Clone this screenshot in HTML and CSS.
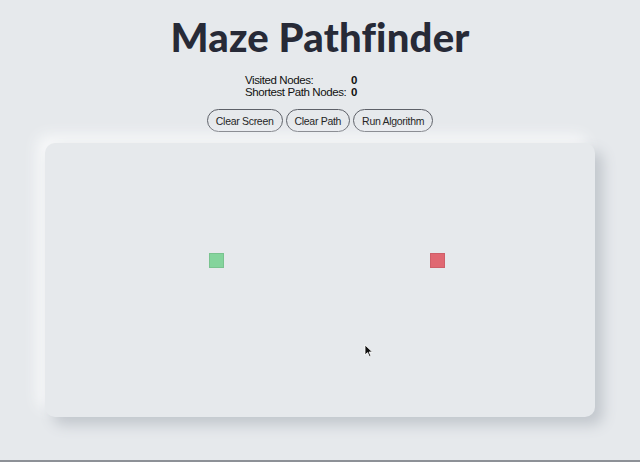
FILE: index.html
```html
<!DOCTYPE html>
<html>
<head>
<meta charset="utf-8">
<link rel="stylesheet" href="styles.css">
</head>
<body>
<div class="page">
  <h1 class="title">Maze Pathfinder</h1>
  <div class="stats">
    <span class="label">Visited Nodes:</span><span class="value">0</span>
    <span class="label">Shortest Path Nodes:</span><span class="value">0</span>
  </div>
  <div class="buttons">
    <button class="btn">Clear Screen</button>
    <button class="btn">Clear Path</button>
    <button class="btn">Run Algorithm</button>
  </div>
  <div class="board">
    <div class="grid">
      <div class="node start"></div>
      <div class="node end"></div>
    </div>
    <svg class="cursor" width="10" height="14" viewBox="0 0 10 14"><path d="M1 1 L1 11 L3.5 8.6 L5.4 12.6 L6.9 11.9 L5.1 8 L8.4 8 Z" fill="#111" stroke="#fff" stroke-width="0.8"/></svg>
  </div>
</div>
<div class="bottom-line"></div>
</body>
</html>
```
FILE: styles.css
```css
html, body {
  margin: 0;
  padding: 0;
  background: #e6e9ec;
  height: 100%;
}
body {
  display: flex;
  flex-direction: column;
  justify-content: space-between;
  font-family: "Liberation Sans", Arial, sans-serif;
}
.page {
  display: flex;
  flex-direction: column;
  align-items: center;
}
.title {
  margin: 13px 0 0 0;
  font-family: Lato, "Open Sans", sans-serif;
  font-weight: 900;
  font-size: 40px;
  line-height: 48px;
  color: #272a37;
  letter-spacing: 0.2px;
}
.stats {
  margin-top: 13px;
  width: 150px;
  display: grid;
  grid-template-columns: 106px auto;
  font-size: 11.5px;
  line-height: 12px;
  color: #111;
  white-space: nowrap;
  letter-spacing: -0.4px;
}
.value {
  font-weight: bold;
}
.buttons {
  margin-top: 11px;
  display: flex;
  gap: 3px;
}
.btn {
  font-family: "Liberation Sans", Arial, sans-serif;
  font-size: 10.5px;
  letter-spacing: -0.3px;
  height: 23px;
  padding: 0 8px;
  border: 1px solid #5d6068;
  border-radius: 12px;
  background: transparent;
  color: #222;
}
.board {
  position: relative;
  margin-top: 11px;
  width: 550px;
  height: 274px;
  border-radius: 10px;
  background: #e6e9ec;
  box-shadow: 8px 8px 14px #c2c7cd, -8px -8px 14px #f7f8f9;
}
.grid {
  display: grid;
  grid-template-columns: 164px 15px 206px 15px;
  grid-template-rows: 110px 15px;
}
.node {
  grid-row: 2;
  box-sizing: border-box;
  border: 1px solid rgba(0,0,0,0.08);
}
.start {
  grid-column: 2;
  background: #84d49c;
}
.end {
  grid-column: 4;
  background: #e06872;
}
.cursor {
  position: absolute;
  left: 319px;
  top: 201px;
}
.bottom-line {
  height: 2px;
  background: #8d9197;
}
```
